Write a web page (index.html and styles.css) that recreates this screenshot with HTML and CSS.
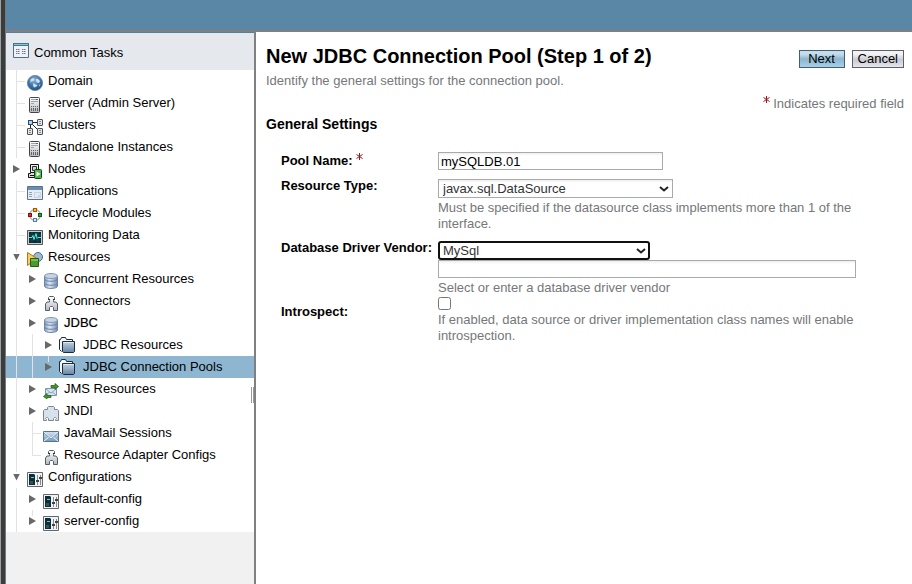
FILE: index.html
```html
<!DOCTYPE html>
<html lang="en">
<head>
<meta charset="utf-8">
<title>New JDBC Connection Pool</title>
<link rel="stylesheet" href="styles.css">
</head>
<body>
<svg class="defs" aria-hidden="true">
  <defs>
    <linearGradient id="silver" x1="0" y1="0" x2="0" y2="1"><stop offset="0" stop-color="#fff"/><stop offset="1" stop-color="#b4b8c0"/></linearGradient>
    <linearGradient id="blue" x1="0" y1="0" x2="0" y2="1"><stop offset="0" stop-color="#d5e3f1"/><stop offset="1" stop-color="#7799bd"/></linearGradient>
    <linearGradient id="steel" x1="0" y1="0" x2="0" y2="1"><stop offset="0" stop-color="#c3d3e2"/><stop offset="1" stop-color="#6484a4"/></linearGradient>
    <linearGradient id="drum" x1="0" y1="0" x2="1" y2="0"><stop offset="0" stop-color="#8299bd"/><stop offset=".4" stop-color="#dce7f5"/><stop offset="1" stop-color="#7189ae"/></linearGradient>
    <radialGradient id="ball" cx=".45" cy=".3" r=".7"><stop offset="0" stop-color="#8ab4d8"/><stop offset=".6" stop-color="#3a73a8"/><stop offset="1" stop-color="#234f7c"/></radialGradient>
    <symbol id="i-tasks" viewBox="0 0 16 16"><path d="M.5 1.500h15v14H.5z" fill="#eef3f7" stroke="#536f87"/><path d="M0 1h16v3H0z" fill="#42778f"/><path d="M1 2h14v1H1z" fill="#8cc1d8"/><path d="M3 7.500h4m2 0h4M3 9.500h4m2 0h4M3 11.500h4m2 0h4" stroke="#778" stroke-dasharray="1 .5 2 .5"/></symbol>
    <symbol id="i-globe" viewBox="0 0 16 16"><circle cx="8" cy="8" r="7.600" fill="url(#ball)" stroke="#5f7f9d" stroke-width=".8"/><path d="M3.500 4.500l2.500-1.500 1.500 1-1 2-2 .5-1 1.500zM9 4l2 0 2 2-1 2-2-.5-1-1.500zM6.500 8l2 1.500 2 .5-1 1.500-2.500 1-1-2zM12 10l1.500-1-1 2.500z" fill="#cfe1ef"/></symbol>
    <symbol id="i-server" viewBox="0 0 16 16"><rect x="2.500" y=".5" width="10" height="15" rx="1" fill="url(#silver)" stroke="#454545"/><path d="M4 2.500h7M4 4.500h7M4 6.500h3" stroke="#a0a4aa"/><path d="M9 2h2v1H9z" fill="#366ad0"/><path d="M4.500 9v1m2-1v1m2-1v1m2-1v1m-6 1v3m2-3v3m2-3v3m2-3v3" stroke="#666"/></symbol>
    <symbol id="i-cluster" viewBox="0 0 16 16"><path d="M5 3.500h6M5 5l6 6M3.500 5v5" fill="none" stroke="#222"/><g fill="#e4e6ea" stroke="#4c4f55"><rect x="1.500" y="1.500" width="4" height="4" fill="#a9d3f3" stroke="#2c4a68"/><rect x="10.500" y=".5" width="5" height="6" rx=".5"/><rect x=".5" y="9.500" width="5" height="6" rx=".5"/><rect x="10.500" y="9.500" width="5" height="6" rx=".5"/></g><path d="M12 2.500h2M12 4.500h2M2 11.500h2M2 13.500h2M12 11.500h2M12 13.500h2" stroke="#888"/></symbol>
    <symbol id="i-node" viewBox="0 0 16 16"><path d="M3.500 1.500h8v8h-8z" fill="#eee" stroke="#111"/><path d="M5.500 3.500h4v4h-4z" fill="#c7d4e0" stroke="#333"/><path d="M1.500 10.500h2v-1h6v5h-8z" fill="#ddd" stroke="#111"/><path d="M3 12.500h4" stroke="#111"/><rect x="7.500" y="6.500" width="7" height="9" rx="1" fill="#55b34f" stroke="#064b12"/><path d="M9.500 8.500v5l4-2.500z" fill="#fff"/></symbol>
    <symbol id="i-app" viewBox="0 0 16 16"><path d="M.5 1.500h15v13H.5z" fill="#e8edf3" stroke="#60718a"/><path d="M1 2h14v3H1z" fill="#688eb2"/><path d="M2 7h3v1H2zM2 9h3v1H2zM2 11h3v1H2z" fill="#8ca4c0"/><path d="M7 7h7v6H7z" fill="#c8d5e5"/><path d="M8 9h5M8 11h3" stroke="#fff"/></symbol>
    <symbol id="i-life" viewBox="0 0 16 16"><circle cx="8" cy="8" r="5.500" fill="none" stroke="#888"/><rect x="6.500" y="1.500" width="3" height="3" fill="#ffb820" stroke="#a35b00"/><rect x="1.500" y="6.500" width="3" height="3" fill="#dd3030" stroke="#8a1010"/><rect x="11.500" y="6.500" width="3" height="3" fill="#3c9c38" stroke="#125b14"/><rect x="6.500" y="11.500" width="3" height="3" fill="#d6edfa" stroke="#557d9c"/></symbol>
    <symbol id="i-monitor" viewBox="0 0 16 16"><path d="M.5 1.500h15v14H.5z" fill="#c9ced2" stroke="#555"/><path d="M2 3h12v11H2z" fill="#092b32"/><path d="M2 6h12M2 11h12M5 3v11M11 3v11" stroke="#154650"/><path d="M2 8.500h3l1-2 1 4 2-6 1 5 1-1h3" fill="none" stroke="#50ebe0"/></symbol>
    <symbol id="i-resource" viewBox="0 0 16 16"><circle cx="11" cy="6" r="4.500" fill="#9fb9d1" stroke="#516c86"/><path d="M.5 1.500v13L10 7.500z" fill="#f6cf60" stroke="#a8781d"/><path d="M3.500 7.500h8v8h-8z" fill="#4a9d2d" stroke="#235e14"/><path d="M4 8h7v2H4z" fill="#75bf54"/></symbol>
    <symbol id="i-db" viewBox="0 0 16 16"><path d="M1.500 3v10c0 3.300 13 3.300 13 0V3z" fill="url(#drum)" stroke="#7387a4"/><path d="M1.500 6c0 3 13 3 13 0M1.500 10c0 3 13 3 13 0" fill="none" stroke="#6a80a2"/><ellipse cx="8" cy="3" rx="6.500" ry="2.500" fill="#c5d3e7" stroke="#8397b2"/></symbol>
    <symbol id="i-connector" viewBox="0 0 16 16"><path d="M6.500 7V5.500l-1-1v-2l1-1h4l1 1v2l-1 1V7h2.500l1.500 2v6.500h-4v-3l-1-1h-2l-1 1v3h-4V9L4 7z" fill="url(#silver)" stroke="#555d66"/><path d="M5 4.500h2m3 0h2" stroke="#333"/></symbol>
    <symbol id="i-folder" viewBox="0 0 16 16"><path d="M2.500 14.500l-2-2V2.500h1l1-2h4l1 2h6v3" fill="#f4f7fa" stroke="#1c2c3c"/><path d="M3.500 4.500h12v10l-1 1h-10l-1-1z" fill="url(#steel)" stroke="#1c2c3c"/><path d="M4.500 5.500h10" stroke="#e3ecf4"/></symbol>
    <symbol id="i-jms" viewBox="0 0 16 16"><path d="M2.500 5.500h11v7h-11z" fill="#d7e4f2" stroke="#7f93ad"/><path d="M3 6l5 4 5-4M3 12l4-3m6 3L9 9" fill="none" stroke="#8fa5bf"/><path d="M8 2.500h4V.5L15.500 3.500 12 6.500V4.500H8zM8 12.500H4v-2L.5 13.500 4 16v-1.500h4z" fill="#3f9a27" stroke="#24651a" stroke-width=".8"/></symbol>
    <symbol id="i-jndi" viewBox="0 0 16 16"><path d="M.5 15.500v-10l1-1h3v-2l1-1h5l1 1v2h3l1 1v10h-3v-1l1-1-1-1h-1l-1 1v2h-5v-2l-1-1h-1l-1 1 1 1v1z" fill="#d8e2ed" stroke="#7d8590"/></symbol>
    <symbol id="i-mail" viewBox="0 0 16 16"><path d="M.5 4.500h15v10H.5z" fill="url(#blue)" stroke="#547494"/><path d="M1 5l7 6 7-6M1 14l5-4m9 4l-5-4" fill="none" stroke="#f1f7fb"/><path d="M1 6l7 6 7-6" fill="none" stroke="#6f8ca9" stroke-width=".7"/></symbol>
    <symbol id="i-config" viewBox="0 0 16 16"><path d="M.5 1.500h15v14H.5z" fill="#f1f2f5" stroke="#62666e"/><path d="M2 3h5l1 1v10H2z" fill="#102c35"/><path d="M4 6h3v1H4z" fill="#4fd0ec"/><path d="M3 10h3v3H3z" fill="#31535c"/><path d="M10.500 4v10M13.500 4v10" stroke="#888"/><path d="M9 9h3v2H9zM12 6h3v2h-3z" fill="#444"/></symbol>
  </defs>
</svg>
<div class="edge"></div>
<div class="app">
  <header class="masthead"></header>
  <div class="body">
    <aside class="sidebar">
      <nav class="nav" aria-label="Common Tasks">
        <a class="tasks" href="#"><svg class="icon"><use href="#i-tasks"/></svg>Common Tasks</a>
        <ul class="tree">
          <li><div class="node"><i class="tee"></i><a href="#"><svg class="icon"><use href="#i-globe"/></svg>Domain</a></div></li>
          <li><div class="node"><i class="tee"></i><a href="#"><svg class="icon"><use href="#i-server"/></svg>server (Admin Server)</a></div></li>
          <li><div class="node"><i class="tee"></i><a href="#"><svg class="icon"><use href="#i-cluster"/></svg>Clusters</a></div></li>
          <li><div class="node"><i class="tee"></i><a href="#"><svg class="icon"><use href="#i-server"/></svg>Standalone Instances</a></div></li>
          <li><div class="node"><button class="toggle" aria-label="Expand Nodes"></button><a href="#"><svg class="icon"><use href="#i-node"/></svg>Nodes</a></div></li>
          <li><div class="node"><i class="tee"></i><a href="#"><svg class="icon"><use href="#i-app"/></svg>Applications</a></div></li>
          <li><div class="node"><i class="tee"></i><a href="#"><svg class="icon"><use href="#i-life"/></svg>Lifecycle Modules</a></div></li>
          <li><div class="node"><i class="tee"></i><a href="#"><svg class="icon"><use href="#i-monitor"/></svg>Monitoring Data</a></div></li>
          <li><div class="node"><button class="toggle open last" aria-label="Collapse Resources"></button><a href="#"><svg class="icon"><use href="#i-resource"/></svg>Resources</a></div>
            <ul>
              <li><div class="node"><i class="line"></i><button class="toggle" aria-label="Expand Concurrent Resources"></button><a href="#"><svg class="icon"><use href="#i-db"/></svg>Concurrent Resources</a></div></li>
              <li><div class="node"><i class="line"></i><button class="toggle" aria-label="Expand Connectors"></button><a href="#"><svg class="icon"><use href="#i-connector"/></svg>Connectors</a></div></li>
              <li><div class="node"><i class="line"></i><button class="toggle" aria-label="Collapse JDBC"></button><a class="parent" href="#"><svg class="icon"><use href="#i-db"/></svg>JDBC</a></div>
                <ul>
                  <li><div class="node"><i class="line"></i><i class="line"></i><button class="toggle" aria-label="Expand JDBC Resources"></button><a class="folder" href="#"><svg class="icon"><use href="#i-folder"/></svg>JDBC Resources</a></div></li>
                  <li><div class="node selected"><i class="line"></i><i class="line"></i><button class="toggle last" aria-label="Expand JDBC Connection Pools"></button><a class="folder" href="#" aria-current="page"><svg class="icon"><use href="#i-folder"/></svg>JDBC Connection Pools</a></div></li>
                </ul>
              </li>
              <li><div class="node"><i class="line"></i><button class="toggle" aria-label="Expand JMS Resources"></button><a href="#"><svg class="icon"><use href="#i-jms"/></svg>JMS Resources</a></div></li>
              <li><div class="node"><i class="line"></i><button class="toggle" aria-label="Expand JNDI"></button><a href="#"><svg class="icon"><use href="#i-jndi"/></svg>JNDI</a></div></li>
              <li><div class="node"><i class="line"></i><i class="tee"></i><a href="#"><svg class="icon"><use href="#i-mail"/></svg>JavaMail Sessions</a></div></li>
              <li><div class="node"><i class="line"></i><i class="tee end"></i><a href="#"><svg class="icon"><use href="#i-connector"/></svg>Resource Adapter Configs</a></div></li>
            </ul>
          </li>
          <li><div class="node"><button class="toggle open last" aria-label="Collapse Configurations"></button><a href="#"><svg class="icon"><use href="#i-config"/></svg>Configurations</a></div>
            <ul>
              <li><div class="node"><i class="line"></i><button class="toggle" aria-label="Expand default-config"></button><a href="#"><svg class="icon"><use href="#i-config"/></svg>default-config</a></div></li>
              <li><div class="node"><i class="line"></i><button class="toggle last" aria-label="Expand server-config"></button><a href="#"><svg class="icon"><use href="#i-config"/></svg>server-config</a></div></li>
            </ul>
          </li>
        </ul>
      </nav>
      <div class="grip"></div>
    </aside>
    <main class="main">
      <div class="titlebar">
        <h1>New JDBC Connection Pool (Step 1 of 2)</h1>
        <div class="actions"><button class="btn primary" type="submit" form="pool">Next</button><button class="btn" type="button">Cancel</button></div>
      </div>
      <p class="intro">Identify the general settings for the connection pool.</p>
      <p class="required"><svg class="star" viewBox="0 0 7 7"><path d="M3.500 0v7M.5 1.500l6 4M6.500 1.500l-6 4"/></svg> Indicates required field</p>
      <h2>General Settings</h2>
      <form id="pool" class="form">
        <div class="row">
          <label for="name">Pool Name: <svg class="star" viewBox="0 0 7 7"><path d="M3.500 0v7M.5 1.500l6 4M6.500 1.500l-6 4"/></svg></label>
          <div class="field"><input class="text short" id="name" type="text" value="mySQLDB.01" required></div>
        </div>
        <div class="row">
          <label for="type">Resource Type:</label>
          <div class="field">
            <div class="pick type"><select id="type"><option>javax.sql.DataSource</option></select><svg class="chevron" viewBox="0 0 10 6"><path d="M1 1l4 3.500L9 1"/></svg></div>
            <p class="help">Must be specified if the datasource class implements more than 1 of the interface.</p>
          </div>
        </div>
        <div class="row tight">
          <label for="vendor">Database Driver Vendor:</label>
          <div class="field">
            <div class="pick vendor"><select id="vendor"><option>MySql</option></select><svg class="chevron" viewBox="0 0 10 6"><path d="M1 1l4 3.500L9 1"/></svg></div>
            <input class="text long" type="text" aria-label="Other database driver vendor">
            <p class="help">Select or enter a database driver vendor</p>
          </div>
        </div>
        <div class="row check">
          <label for="introspect">Introspect:</label>
          <div class="field">
            <input id="introspect" type="checkbox">
            <p class="help">If enabled, data source or driver implementation class names will enable introspection.</p>
          </div>
        </div>
      </form>
    </main>
  </div>
</div>
</body>
</html>
```
FILE: styles.css
```css
* { box-sizing: border-box; }
body {
  margin: 0;
  min-height: 100vh;
  display: flex;
  background: #fff;
  color: #000;
  font: 13px/16px "Liberation Sans", Arial, sans-serif;
}
h1, h2, p, ul { margin: 0; padding: 0; }
ul { list-style: none; }
a { color: inherit; text-decoration: none; }
button, input, select { font: inherit; color: inherit; margin: 0; }
.defs { position: absolute; width: 0; height: 0; }

.edge {
  flex: 0 0 6px;
  background: #3a3d3e;
  border-left: 1px solid #a0a0a0;
  border-right: 1px solid #77797a;
}
.app { flex: 1; min-width: 0; display: flex; flex-direction: column; }
.masthead { height: 32px; background: #5b87a7; border-bottom: 2px solid #808080; }
.body { flex: 1; display: flex; }

.sidebar {
  position: relative;
  flex: 0 0 250px;
  background: #f1f1f1;
  border-right: 2px solid #808080;
}
.nav { background: #fff; border-top: 1px solid #5382a1; }
.tasks {
  display: flex;
  align-items: center;
  gap: 5px;
  height: 37px;
  padding: 2px 0 0 7px;
  background: #e5e8ed;
}
.tasks .icon { margin-bottom: 6px; }
.icon { width: 16px; height: 16px; flex: none; }
.node { display: flex; height: 22px; padding-left: 3px; }
.node i, .toggle { flex: 0 0 16px; height: 22px; }
.node a {
  display: flex;
  align-items: flex-end;
  gap: 5px;
  padding-left: 2px;
  line-height: 22px;
}
.node .icon { margin-bottom: 1px; }
.node .folder { gap: 8px; align-items: center; }
.node .folder .icon { margin-bottom: 0; }
.node .parent { text-shadow: 0 0 1px #0006; }
.selected { background: #8fb6d0; }
.line, .tee {
  background: linear-gradient(#e2e2e2, #e2e2e2) 7px 0 / 1px 100% no-repeat;
}
.tee {
  background:
    linear-gradient(#e2e2e2, #e2e2e2) 7px 0 / 1px 100% no-repeat,
    linear-gradient(#e2e2e2, #e2e2e2) 7px 11px / 9px 1px no-repeat;
}
.tee.end { background-size: 1px 11px, 9px 1px; }
.toggle {
  display: flex;
  align-items: center;
  padding: 0 0 0 4px;
  border: 0;
  background: none;
}
.toggle.last { background: linear-gradient(#e2e2e2, #e2e2e2) 7px 0 / 1px 6px no-repeat; }
.toggle::before {
  content: "";
  width: 7px;
  height: 8px;
  background: #686868;
  clip-path: polygon(0 0, 100% 50%, 0 100%);
}
.toggle.open::before { height: 7px; clip-path: polygon(0 0, 100% 0, 50% 100%); }
.grip {
  position: absolute;
  right: 0;
  top: 355px;
  width: 3px;
  height: 16px;
  background: #fff;
  border: solid #999;
  border-width: 0 1px;
}

.main { flex: 1; min-width: 0; padding: 13px 8px 13px 10px; }
.titlebar { display: flex; justify-content: space-between; align-items: flex-start; }
h1 { font-size: 20px; line-height: 22px; }
.actions { display: flex; gap: 7px; padding-top: 5px; }
.btn {
  height: 18px;
  min-width: 46px;
  padding: 0 5px;
  border: 1px solid #5c6068;
  background: linear-gradient(#f2f2f5 0 20%, #c9cad2 55%, #e6e6ec);
  line-height: 14px;
}
.btn.primary {
  border-color: #3d6078;
  background: linear-gradient(#c5dcea 0 20%, #8cb5cf 50%, #a9d0e8);
}
.intro { margin-top: 5px; color: #75777a; }
.required { margin-top: 7px; color: #75777a; text-align: right; }
.star { width: 7px; height: 7px; vertical-align: 5px; fill: none; stroke: #a5121b; }
h2 { margin-top: 4px; font-size: 14px; line-height: 16px; }

.form { padding: 19px 0 0 15px; }
.row { display: grid; grid-template-columns: 157px 1fr; margin-bottom: 8px; }
.row label { font-weight: 700; white-space: nowrap; }
.row:first-child label { padding-top: 2px; }
.tight { margin-bottom: 0; }
.check label { padding-top: 8px; }
.field { padding-top: 1px; }
.text {
  display: block;
  max-width: 100%;
  height: 18px;
  padding: 0 2px;
  border: 1px solid #aaa;
  background: linear-gradient(#eee, #fff 3px);
}
.short { width: 225px; }
.long { width: 418px; }
.pick { position: relative; height: 19px; }
.pick select {
  display: block;
  appearance: none;
  width: 100%;
  height: 19px;
  padding: 0 18px 0 4px;
  border: 1px solid #aaa;
  border-radius: 0;
  background: linear-gradient(#eee, #fff 3px);
  color: #333;
  outline: 0;
}
.type { width: 235px; }
.vendor { width: 212px; }
.pick.vendor select { border: 2px solid #101010; border-radius: 3px; padding-left: 3px; background: #fff; }
.chevron {
  position: absolute;
  right: 4px;
  top: 7px;
  width: 10px;
  height: 6px;
  fill: none;
  stroke: #222;
  stroke-width: 2;
  pointer-events: none;
}
.help { max-width: 430px; padding-top: 2px; color: #75777a; }
.check input { display: block; width: 13px; height: 13px; }
```
